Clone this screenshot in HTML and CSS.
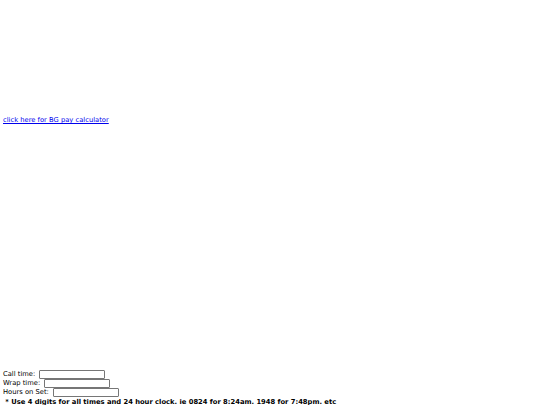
FILE: index.html
```html
<!DOCTYPE html>
<html>
<head>
<meta charset="utf-8">
<link rel="stylesheet" href="styles.css">
</head>
<body>
<div class="top-space"></div>
<a class="calc-link" href="#">click here for BG pay calculator</a>
<div class="mid-space"></div>
<form class="times">
  <div class="row">Call time: <input type="text" class="field"></div>
  <div class="row">Wrap time: <input type="text" class="field"></div>
  <div class="row">Hours on Set: <input type="text" class="field"></div>
  <div class="note">&nbsp;* Use 4 digits for all times and 24 hour clock. ie 0824 for 8:24am. 1948 for 7:48pm. etc</div>
</form>
</body>
</html>
```
FILE: styles.css
```css
html, body {
  margin: 0;
  padding: 0;
  background: #fff;
}
body {
  padding: 0 3px;
  font-family: "DejaVu Sans", Verdana, sans-serif;
  font-size: 6.75px;
  line-height: 9px;
  color: #000;
}
.top-space {
  height: 115px;
}
.calc-link {
  color: #0000ee;
  text-decoration: underline;
  display: block;
  line-height: 10px;
}
.mid-space {
  height: 245px;
}
.row {
  height: 9px;
  display: flex;
  align-items: center;
  gap: 4px;
  white-space: nowrap;
}
.field {
  width: 64px;
  height: 7px;
  padding: 0;
  margin: 0;
  border: 1px solid #767676;
  border-radius: 1px;
  font-size: 7px;
}
.note {
  font-weight: bold;
  white-space: nowrap;
  margin-top: 1px;
}
```
